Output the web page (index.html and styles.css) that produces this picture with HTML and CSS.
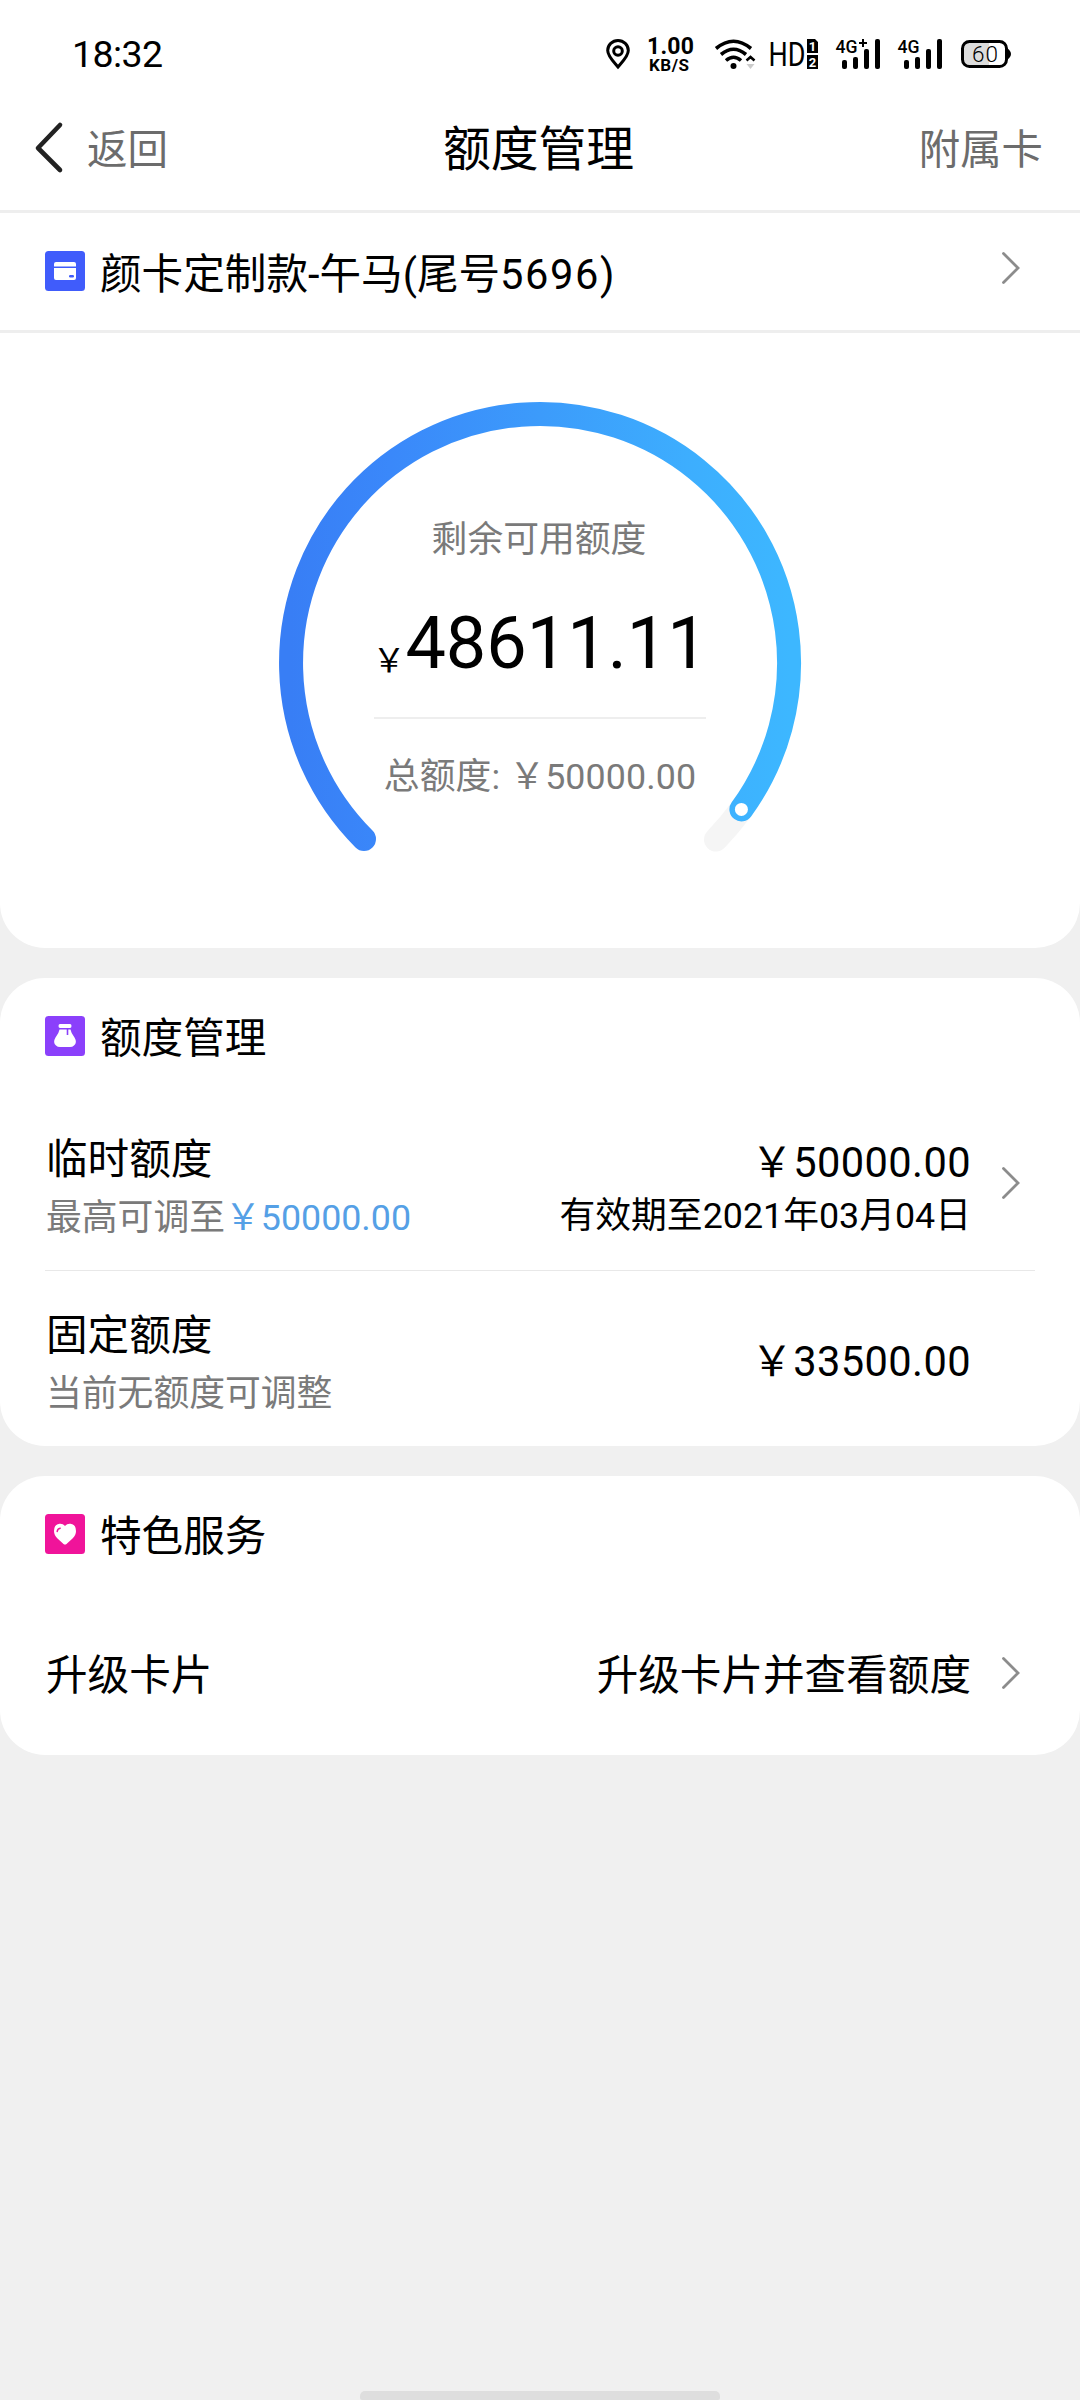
FILE: index.html
```html
<!DOCTYPE html>
<html lang="zh-CN">
<head>
<meta charset="utf-8">
<title>额度管理</title>
<link rel="stylesheet" href="styles.css">
</head>
<body>
<div class="top">
  <div class="status">
    <svg class="time" width="100" height="30" viewBox="0 0 100 30"><text x="2" y="28" font-size="37.500" textLength="91" lengthAdjust="spacing">18:32</text></svg>
    <div class="status-icons">
      <svg class="i-pin" width="24" height="30" viewBox="0 0 24 30" fill="none" stroke="#000" stroke-width="3"><path d="M12 28C7 22 1.700 17 1.700 11.500a10.300 10 0 0 1 20.600 0C22.300 17 17 22 12 28z"/><circle cx="12" cy="12" r="4.300"/></svg>
      <svg class="i-net" width="48" height="34" viewBox="0 0 48 34"><g font-weight="700"><text x="0" y="15" font-size="23" textLength="47">1.00</text><text x="2" y="32" font-size="17" textLength="40">KB/S</text></g></svg>
      <svg class="i-wifi" width="40" height="30" viewBox="0 0 40 30" fill="none" stroke="#000" stroke-width="3.600"><path d="M1 9.500Q18.500-5 36 9.500M6 15.500Q18.500 5 31 15.500M11 21.500Q18.500 15 26 21.500"/><circle cx="18.500" cy="27" r="3" fill="#000" stroke="none"/><path d="M31.500 21.500L35.500 18l4 3.500" stroke-width="2.600"/><path d="M31.500 25h8l-4 5z" fill="#ccc" stroke="none"/></svg>
      <svg class="i-hd" width="48" height="30" viewBox="0 0 48 30"><text x="-1.500" y="27" font-size="33" textLength="37" lengthAdjust="spacingAndGlyphs">HD</text><path d="M37 0h8l3 3v11H37zM37 16h11v14H37z"/><g fill="#fff" font-weight="700" font-size="13" text-anchor="middle"><text x="42.500" y="11.500">1</text><text x="42.500" y="27.500">2</text></g></svg>
      <svg class="i-sig" width="44" height="30" viewBox="0 0 44 30"><text x="-.5" y="14" font-size="19" font-weight="500" textLength="22" lengthAdjust="spacingAndGlyphs">4G</text><path d="M23 4h8M27 0v8" stroke="#000" stroke-width="2"/><rect x="6" y="21" width="5" height="9" rx="2"/><rect x="17" y="18" width="5" height="12" rx="2"/><rect x="28" y="10" width="5" height="20" rx="2"/><rect x="39" y="0" width="5" height="30" rx="2"/></svg>
      <svg class="i-sig" width="44" height="30" viewBox="0 0 44 30"><text x="-.5" y="14" font-size="19" font-weight="500" textLength="22" lengthAdjust="spacingAndGlyphs">4G</text><rect x="6" y="21" width="5" height="9" rx="2"/><rect x="17" y="18" width="5" height="12" rx="2"/><rect x="28" y="10" width="5" height="20" rx="2"/><rect x="39" y="0" width="5" height="30" rx="2"/></svg>
      <svg class="i-bat" width="50" height="30" viewBox="0 0 50 30"><path d="M8 2.500h20v25H8q-6 0-6-6v-13q0-6 6-6z" fill="#ddd"/><rect x="1.500" y="2.500" width="44" height="25" rx="7" fill="none" stroke="#000" stroke-width="3"/><path d="M46 9q4 3 4 6t-4 6z"/><text x="11" y="23" font-size="22.500" font-weight="300" textLength="26">60</text></svg>
    </div>
  </div>
  <header class="nav">
    <div class="back">
      <svg width="30" height="52" viewBox="0 0 30 52" fill="none" stroke="#222" stroke-width="4.600" stroke-linecap="round" stroke-linejoin="round"><path d="M26 3L4 26l22 22"/></svg>
      <span>返回</span>
    </div>
    <h1>额度管理</h1>
    <a class="extra">附属卡</a>
  </header>
  <div class="card-row">
    <svg class="badge" viewBox="0 0 40 40"><rect width="40" height="40" rx="3.500" fill="#405cfb"/><path d="M11 11h18q2 0 2 2v2.500H9V13q0-2 2-2zM9 17h22v10q0 2-2 2H11q-2 0-2-2z" fill="#fff"/><rect x="24" y="24" width="5" height="2.500" rx="1.200" fill="#405cfb"/></svg>
    <span class="card-name">颜卡定制款-午马(尾号<span class="digits">5696)</span></span>
    <svg class="chev" viewBox="0 0 20 34"><path d="M2.500 2.500L17 17 2.500 31.500"/></svg>
  </div>
  <section class="gauge">
    <svg class="ring" width="540" height="470" viewBox="270 393 540 470" fill="none" stroke-width="24" stroke-linecap="round">
      <defs><linearGradient id="g" gradientUnits="userSpaceOnUse" x1="290" y1="0" x2="790" y2="0"><stop offset="0" stop-color="#387ef5"/><stop offset=".2" stop-color="#3a88fa"/><stop offset=".5" stop-color="#3c9bfb"/><stop offset=".8" stop-color="#3daefe"/><stop offset="1" stop-color="#3db7ff"/></linearGradient></defs>
      <path d="M741.400 809.400Q729 826 716 839.500" stroke="#f5f5f5"/>
      <path d="M364 839A249 249 0 1 1 741.400 809.400" stroke="url(#g)"/>
      <circle cx="741.400" cy="809.400" r="6.500" fill="#fff"/>
    </svg>
    <div class="gauge-text">
      <p class="cap">剩余可用额度</p>
      <p class="amount"><small>￥</small>48611.11</p>
      <p class="total">总额度: ￥50000.00</p>
    </div>
  </section>
</div>

<section class="panel limits">
  <h2><svg class="badge" viewBox="0 0 40 40"><rect width="40" height="40" rx="3.500" fill="#8b40fb"/><path d="M15 8h10q1.500 0 1.500 2T25 12H15q-1.500 0-1.500-2T15 8z" fill="#fff"/><path d="M14.500 13.500h11q.5 3.500 4 8 3 5-.5 8-1.500 1.500-4 1.500H15q-2.500 0-4-1.500-3.500-3-.5-8 3.500-4.500 4-8z" fill="#fff"/><path d="M22.500 13v6" stroke="#8b40fb" stroke-width="1.600"/></svg><span>额度管理</span></h2>
  <div class="row first">
    <div class="left"><p>临时额度</p><p class="sub">最高可调至<b>￥50000.00</b></p></div>
    <div class="right"><p class="money">￥50000.00</p><p class="date">有效期至2021年03月04日</p></div>
    <svg class="chev" viewBox="0 0 20 34"><path d="M2.500 2.500L17 17 2.500 31.500"/></svg>
  </div>
  <div class="row">
    <div class="left"><p>固定额度</p><p class="sub">当前无额度可调整</p></div>
    <div class="right"><p class="money">￥33500.00</p></div>
  </div>
</section>

<section class="panel services">
  <h2><svg class="badge" viewBox="0 0 40 40"><rect width="40" height="40" rx="3.500" fill="#f0149a"/><path d="M20 12q2-2.500 5.500-2.200Q31 10.500 31 17q0 4-3.500 7.500l-6 5.500q-1.500 1.200-3 0l-6-5.500Q9 21 9 17q0-6.500 5.500-7.200Q18 9.500 20 12z" fill="#fff"/><path d="M12.200 17.500q.3-2.800 3-3.300" fill="none" stroke="#f0149a" stroke-width="1.500" stroke-linecap="round"/></svg><span>特色服务</span></h2>
  <div class="row">
    <div class="left"><p>升级卡片</p></div>
    <div class="right"><p>升级卡片并查看额度</p></div>
    <svg class="chev" viewBox="0 0 20 34"><path d="M2.500 2.500L17 17 2.500 31.500"/></svg>
  </div>
</section>
<div class="home-bar"></div>
</body>
</html>
```
FILE: styles.css
```css
* { box-sizing: border-box; margin: 0; padding: 0; }

body {
  display: flex;
  flex-direction: column;
  gap: 30px;
  width: 1080px;
  height: 2400px;
  overflow: hidden;
  background: #f0f0f0;
  color: #000;
  font-family: Roboto, "Noto Sans CJK SC", sans-serif;
  font-size: 41.6px;
  line-height: 48px;
  white-space: nowrap;
}

svg { display: block; flex: none; overflow: visible; }
text { font-family: Roboto, sans-serif; }

.top {
  height: 948px;
  background: #fff;
  border-radius: 0 0 45px 45px;
}

/* status bar */
.status {
  display: flex;
  justify-content: space-between;
  height: 86px;
  padding: 39px 69px 0 70px;
}
.status-icons { display: flex; }
.i-net { margin-left: 17px; }
.i-wifi { margin-left: 20px; }
.i-hd { margin-left: 15px; }
.i-sig { margin-left: 18px; }
.i-bat { margin-left: 19px; }

/* navigation */
.nav {
  display: grid;
  grid-template-columns: 1fr auto 1fr;
  align-items: center;
  height: 127px;
  padding: 0 37px 0 34px;
  border-bottom: 3px solid #eee;
  color: #6c6c6c;
}
.back { display: flex; align-items: center; gap: 23px; font-size: 40.5px; }
.back span, .nav h1, .extra { padding-top: 3px; }
.nav h1 { color: #000; font-size: 47.8px; font-weight: 400; }
.extra { justify-self: end; font-size: 41.4px; }

.card-row {
  display: flex;
  align-items: center;
  height: 120px;
  padding: 0 59px 0 45px;
  border-bottom: 3px solid #eee;
}
.badge { width: 40px; height: 40px; }
.card-row .badge { margin-bottom: 1px; }
.card-name { flex: 1; margin-left: 15px; padding-top: 6px; }
.digits { letter-spacing: 1.6px; }
.chev {
  width: 20px;
  height: 34px;
  fill: none;
  stroke: #8c8c8c;
  stroke-width: 2.8;
  stroke-linecap: round;
}
.card-row .chev { margin-bottom: 8px; }

/* gauge */
.gauge { display: grid; justify-items: center; padding-top: 60px; }
.ring, .gauge-text { grid-area: 1 / 1; }
.gauge-text { width: 332px; padding-top: 123px; text-align: center; font-size: 35.8px; color: #7a7a7a; }
.cap { height: 50px; margin-left: -2px; }
.amount {
  display: flex;
  align-items: baseline;
  justify-content: center;
  height: 153px;
  padding-top: 38px;
  border-bottom: 2px solid #eee;
  color: #000;
  font-size: 72px;
  line-height: 80px;
}
.amount small { padding-top: 4px; font-size: 33px; transform: translateY(4px); }
.total { padding-top: 34px; letter-spacing: .1px; }

/* panels */
.panel { background: #fff; border-radius: 45px; padding: 36px 45px 0; }
.panel h2 { display: flex; align-items: center; gap: 15px; height: 44px; font-size: 41.6px; font-weight: 400; }
.panel h2 span { padding-top: 6px; }
.limits { height: 468px; }
.services { height: 279px; }
.row { display: flex; align-items: center; padding: 0 14px 0 1px; }
.left { flex: 1; }
.right { margin-right: 30px; text-align: right; }
.sub { padding-top: 10px; color: #7a7a7a; font-size: 35.8px; }
.sub b { color: #55a0e6; font-weight: 400; }
.money { letter-spacing: .4px; }
.date { padding-top: 5px; font-size: 35.8px; }
.limits .row { height: 175px; }
.limits .row .left { padding-top: 12px; }
.limits .row .right { padding-top: 7px; }
.limits .first { height: 213px; margin: 0; padding-top: 38px; border-bottom: 1px solid #e8e8e8; }
.limits .first .right { padding-top: 12px; }
.limits .row:last-child .right { margin-right: 50px; }
.services .row { height: 233px; }
.services .row p { padding-top: 7px; }

.home-bar {
  width: 360px;
  height: 9px;
  margin: auto auto 0;
  border-radius: 5px 5px 2px 2px;
  background: #dedede;
}
```
